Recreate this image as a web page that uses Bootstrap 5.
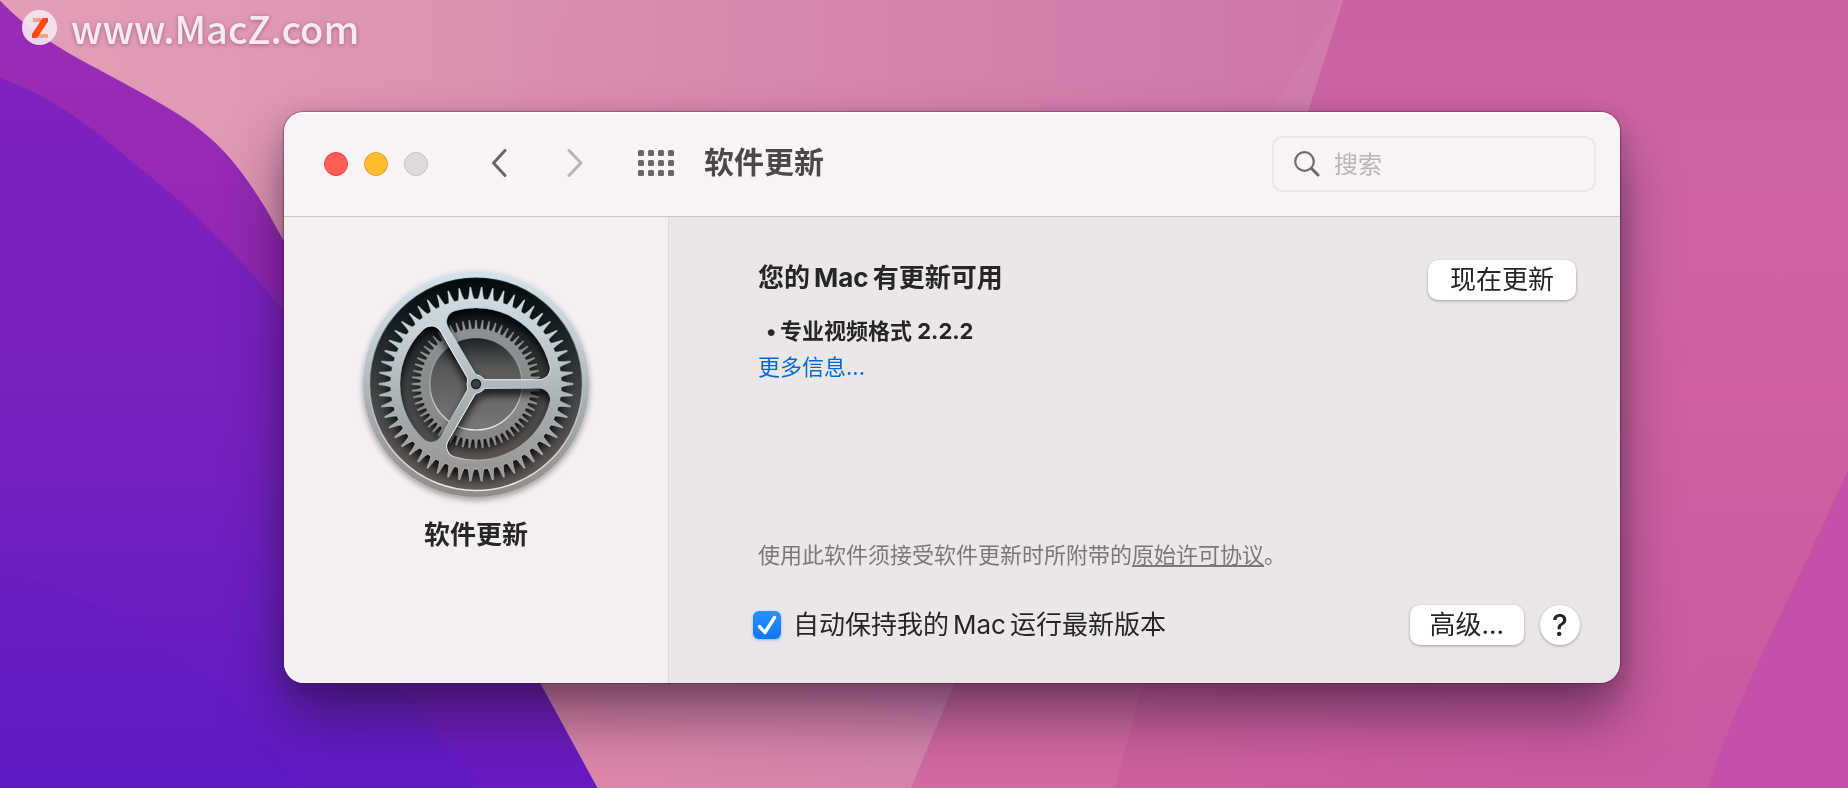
<!DOCTYPE html>
<html lang="zh-CN">
<head>
<meta charset="utf-8">
<meta name="viewport" content="width=device-width, initial-scale=1">
<title>软件更新</title>
<link rel="stylesheet" href="https://cdn.jsdelivr.net/npm/bootstrap@5.3.0/dist/css/bootstrap.min.css">
<style>
  body { font-family: Inter, "Noto Sans CJK SC", sans-serif; color: #262626; background: #d076a4; }
  .wallpaper { position: fixed; inset: 0; width: 100%; height: 100%; z-index: -1; }
  .site-mark { height: 112px; padding: 0 22px; gap: 14px; font: 500 38px/56px "Noto Sans CJK SC", sans-serif; color: #f7e9f0; text-shadow: 0 1px 4px rgba(90,30,70,.45); }
  .site-mark svg { margin-top: 10px; }
  .app-window { margin: 0 228px 105px 284px; border-radius: 20px; overflow: hidden; background: #ebe7e8;
    box-shadow: 0 0 1px 1px rgba(60,20,50,.35), 0 34px 56px rgba(30,15,40,.5), 0 6px 24px rgba(40,15,45,.2); }
  .toolbar { height: 105px; padding: 0 24px 0 40px; background: #f9f3f5; border-bottom: 1px solid #c8c3c5; box-shadow: inset 0 2px #fefcfd; }
  .light { width: 24px; height: 24px; padding: 0; border-radius: 50%; border: 1px solid; }
  .light-close { background: #ff5f57; border-color: #e0443e; }
  .light-min { background: #febc2e; border-color: #dea123; }
  .light-zoom { background: #dfdadc; border-color: #c5c0c2; }
  .tool { padding: 0; border: 0; background: none; line-height: 0; }
  .tool-grid { margin: 0 26px 0 30px; }
  .title { font-size: 30px; line-height: 40px; font-weight: 700; color: #4b484a; }
  .search-box { width: 324px; height: 56px; padding: 0 20px; gap: 14px; border: 2px solid #ece6e8; border-radius: 11px; }
  .search-box input { min-width: 0; padding: 2px 0 0; border: 0; outline: 0; background: none; font-size: 24px; line-height: 32px; color: #262626; }
  .search-box input::placeholder { color: #b9b4b6; opacity: 1; }
  .side { flex: 0 0 385px; background: #f4eff1; border-right: 1px solid #dedadb; padding: 42px 0 40px; gap: 8px; }
  .side svg { width: 250px; height: 250px; }
  .label-lg { font-size: 26px; line-height: 36px; }
  .latin { margin: 0 4px; }
  .pane { min-height: 466px; padding: 43px 40px 38px 89px; }
  .text-md { font-size: 22px; line-height: 36px; }
  .updates { padding-left: 7px; margin: 17px 0 0; list-style: none; }
  .updates li::before { content: "•"; display: inline-block; width: 15px; font-weight: 400; }
  .more { color: #0068da; text-decoration: none; }
  .legal { color: #7b7879; }
  .legal a { color: inherit; text-underline-offset: 2px; }
  .push { height: 40px; padding: 0 20px; border: 0; border-radius: 10px; background: #fff; color: #262626; font-size: 26px; line-height: 38px; box-shadow: 0 1px 3px rgba(0,0,0,.32); }
  .push-main { min-width: 148px; }
  .push-help { width: 40px; padding: 0; border-radius: 50%; font-size: 30px; font-weight: 500; }
  .tick { appearance: none; width: 28px; height: 28px; margin: 0 0 0 -5px; border-radius: 6px; box-shadow: 0 1px 3px rgba(0,90,220,.4);
    background: linear-gradient(#2a90fd, #0a78fa); }
  .tick:checked { background: url("data:image/svg+xml,%3Csvg xmlns='http://www.w3.org/2000/svg' viewBox='0 0 28 28'%3E%3Cpath d='M6.500 15.500 12 21.500 21.500 6.500' fill='none' stroke='%23fff' stroke-width='3.400' stroke-linecap='round' stroke-linejoin='round'/%3E%3C/svg%3E"), linear-gradient(#2a90fd, #0a78fa); }
</style>
</head>
<body>
<svg class="wallpaper" viewBox="0 0 1848 788" preserveAspectRatio="none" aria-hidden="true">
  <defs>
    <linearGradient id="wPink" x1="0" x2="1" y1="0" y2="0"><stop offset="0" stop-color="#e39cb5"/><stop offset=".3" stop-color="#dc8eb0"/><stop offset=".7" stop-color="#cf78a8"/><stop offset="1" stop-color="#cb68a2"/></linearGradient>
    <linearGradient id="wRight" x1="0" x2="0" y1="0" y2="1"><stop offset="0" stop-color="#cb62a0"/><stop offset=".2" stop-color="#ce66a3"/><stop offset=".5" stop-color="#cf629f"/><stop offset="1" stop-color="#c758a2"/></linearGradient>
    <linearGradient id="wLow" x1="0" x2="1" y1="0" y2="0"><stop offset="0" stop-color="#e088a8"/><stop offset="1" stop-color="#d584ae"/></linearGradient>
    <linearGradient id="wRose" x1="0" x2="1" y1="0" y2="0"><stop offset="0" stop-color="#cc629b"/><stop offset="1" stop-color="#cc629b" stop-opacity="0"/></linearGradient>
    <linearGradient id="wViolet" x1="0" x2="0" y1="0" y2="1"><stop offset="0" stop-color="#9a2db6"/><stop offset=".35" stop-color="#9127b2"/><stop offset="1" stop-color="#661ac0"/></linearGradient>
    <linearGradient id="wIndigo" x1="0" x2="0" y1="0" y2="1"><stop offset="0" stop-color="#7e22c0"/><stop offset=".5" stop-color="#7621bf"/><stop offset="1" stop-color="#5f1bc4"/></linearGradient>
  </defs>
  <path fill="url(#wPink)" d="M0 0H1848V788H0z"/>
  <path fill="#fff" fill-opacity=".025" d="M0 0H570L510 112 380 340H0z"/>
  <path fill="#fff" fill-opacity=".04" d="M1343 0 1270 112 1200 240H1280z"/>
  <path fill="url(#wRight)" d="M1343 0H1848V788H1100L1265 240 1308 112z"/>
  <path fill="url(#wLow)" d="M400 600H982L955 682 911 788H500z"/>
  <path fill="#d16a9f" d="M982 600H1165L1144 682 1115 788H911L955 682z"/>
  <path fill="url(#wRose)" d="M1165 600H1848V788H1115L1144 682z"/>
  <path fill="#c350a9" d="M1848 470V788H1708C1735 700 1790 600 1848 470z"/>
  <path fill="url(#wViolet)" stroke="#e59cc4" stroke-opacity=".6" d="M-2 -2C20 22 45 40 87 63C120 81 150 96 180 115C225 144 245 175 267 210L283 239C360 340 480 560 540 682L599 790H-2z"/>
  <path fill="url(#wIndigo)" d="M0 78C40 92 70 112 100 135L187 207C225 244 255 275 290 320C350 430 380 640 395 682Q440 735 480 788H0z"/>
  <path fill="#5017c6" fill-opacity=".09" d="M0 570C110 600 220 660 300 788H0z"/>
</svg>

<header class="site-mark d-flex align-items-start">
  <svg width="35" height="35" viewBox="0 0 35 35" aria-hidden="true"><circle cx="17.500" cy="17.500" r="17.500" fill="#f3e6f0" fill-opacity=".93"/><path fill="#fba184" d="M11 8h8v4h-8zM16 24h10v4H16z"/><path fill="#fd4a14" d="M20.500 8H26v3.500L15 28h-5v-4z"/></svg>
  <span>www.MacZ.com</span>
</header>

<main class="app-window">
  <div class="toolbar d-flex align-items-center">
    <div class="d-flex gap-3">
      <button type="button" class="light light-close" aria-label="关闭"></button>
      <button type="button" class="light light-min" aria-label="最小化"></button>
      <button type="button" class="light light-zoom" aria-label="缩放"></button>
    </div>
    <nav class="d-flex align-items-center ms-5 ps-3">
      <button type="button" class="tool" aria-label="后退"><svg width="16" height="30" fill="none" stroke="#6b6567" stroke-width="3" stroke-linecap="round" stroke-linejoin="round"><path d="M13 1.500 1.500 14 13 26.500"/></svg></button>
      <button type="button" class="tool ms-5 ps-2 pe-2" aria-label="前进"><svg width="36" height="30" fill="none" stroke="#bab4b6" stroke-width="3" stroke-linecap="round" stroke-linejoin="round"><path d="M5 1.500 17 14 5 26.500"/></svg></button>
      <button type="button" class="tool tool-grid" aria-label="显示全部"><svg id="grid" width="36" height="28" fill="#6b6567"></svg></button>
    </nav>
    <h1 class="title mb-0 ms-1 pb-1">软件更新</h1>
    <label class="search-box d-flex align-items-center ms-auto">
      <svg class="flex-shrink-0" width="26" height="26" fill="none" stroke="#6f6a6c" stroke-linecap="round"><circle cx="10.500" cy="10.500" r="9.300" stroke-width="2.200"/><path stroke-width="3" d="m17.500 17.500 6.500 6.500"/></svg>
      <input class="flex-fill" type="search" placeholder="搜索" aria-label="搜索">
    </label>
  </div>

  <div class="d-flex">
    <aside class="side d-flex flex-column align-items-center">
      <svg viewBox="-125 -125 250 250" aria-hidden="true">
        <defs>
          <linearGradient id="metal" gradientUnits="userSpaceOnUse" x1="0" x2="0" y1="-113" y2="113"><stop offset="0" stop-color="#d5e5ec"/><stop offset=".3" stop-color="#c2ced3"/><stop offset=".6" stop-color="#a7aeaf"/><stop offset="1" stop-color="#908d8a"/></linearGradient>
          <linearGradient id="metal2" gradientUnits="userSpaceOnUse" x1="0" x2="0" y1="-64" y2="64"><stop offset="0" stop-color="#8e9293"/><stop offset="1" stop-color="#878785"/></linearGradient>
          <linearGradient id="well" x1="0" x2="0" y1="0" y2="1"><stop offset="0" stop-color="#020a0d"/><stop offset=".2" stop-color="#151c1e"/><stop offset=".55" stop-color="#454646"/><stop offset="1" stop-color="#69625e"/></linearGradient>
          <linearGradient id="plate" x1="0" x2="0" y1="0" y2="1"><stop offset="0" stop-color="#1e2223"/><stop offset=".3" stop-color="#555656"/><stop offset=".65" stop-color="#686866"/><stop offset="1" stop-color="#777775"/></linearGradient>
          <linearGradient id="rim" x1="0" x2="0" y1="0" y2="1"><stop offset="0" stop-color="#9fb3bb" stop-opacity=".2"/><stop offset=".5" stop-color="#c4cfd2" stop-opacity=".6"/><stop offset="1" stop-color="#f1f0ee"/></linearGradient>
          <filter id="drop" x="-20%" y="-20%" width="140%" height="150%"><feDropShadow dx="0" dy="6" stdDeviation="4" flood-color="#000" flood-opacity=".9"/></filter>
          <filter id="base" x="-20%" y="-20%" width="140%" height="150%"><feDropShadow dx="0" dy="3" stdDeviation="3" flood-color="#000" flood-opacity=".35"/></filter>
          <path id="opening" d="M10 -4.300L63.200 -4.300A11 11 0 0 0 73.900 -17.900A76 76 0 0 0 -21.500 -72.900A11 11 0 0 0 -27.900 -56.900L-1.300 -10.800Q-.6 -9.600 1.600 -8.900A9 9 0 0 1 6.900 -5.800Q8.600 -4.300 10 -4.300Z"/>
          <g id="openings"><use href="#opening"/><use href="#opening" transform="rotate(120)"/><use href="#opening" transform="rotate(240)"/></g>
          <mask id="cut" maskUnits="userSpaceOnUse" x="-113" y="-113" width="226" height="226"><path fill="#fff" d="M-113-113h226v226h-226z"/><use href="#openings" fill="#000"/><circle r="4.500" fill="#000"/></mask>
        </defs>
        <circle r="113" fill="url(#metal)" filter="url(#base)"/>
        <circle r="106.500" fill="url(#well)" stroke="url(#rim)" stroke-width="1.500"/>
        <g filter="url(#drop)">
          <path id="smallGear" fill="url(#metal2)" stroke="#b9bdbd" stroke-width=".3"/>
        </g>
        <circle r="46" fill="url(#plate)" stroke="url(#rim)" stroke-width="1.200"/>
        <g filter="url(#drop)"><g mask="url(#cut)"><path id="bigGear" fill="url(#metal)" stroke="#dce5e8" stroke-width=".4"/></g></g>
        <use href="#openings" fill="none" stroke="url(#rim)" stroke-width="1"/>
        <circle r="4.500" fill="#3d4040" stroke="#1e2222" stroke-width="1.400"/>
      </svg>
      <strong class="label-lg">软件更新</strong>
    </aside>

    <section class="pane flex-fill d-flex flex-column">
      <div class="d-flex justify-content-between align-items-start">
        <div>
          <h2 class="label-lg fw-bold mb-0">您的<span class="latin">Mac</span>有更新可用</h2>
          <ul class="updates text-md fw-bold"><li>专业视频格式 2.2.2</li></ul>
          <a class="more text-md" href="#">更多信息...</a>
        </div>
        <button type="button" class="push push-main me-1">现在更新</button>
      </div>
      <p class="legal text-md mt-auto mb-3 pb-3">使用此软件须接受软件更新时所附带的<a href="#">原始许可协议</a>。</p>
      <div class="d-flex align-items-center">
        <input class="tick" type="checkbox" id="auto" checked>
        <label class="label-lg ps-2 ms-1" for="auto">自动保持我的<span class="latin">Mac</span>运行最新版本</label>
        <button type="button" class="push ms-auto me-3">高级...</button>
        <button type="button" class="push push-help" aria-label="帮助">?</button>
      </div>
    </section>
  </div>
</main>

<script src="https://cdn.jsdelivr.net/npm/bootstrap@5.3.0/dist/js/bootstrap.bundle.min.js"></script>
<script>
  // Closed outline of a gear with curved, pointed teeth; optional bore.
  function gear(teeth, root, tip, bore, halfBase) {
    const step = 2 * Math.PI / teeth;
    const at = (r, a) => (r * Math.cos(a)).toFixed(2) + ' ' + (r * Math.sin(a)).toFixed(2);
    let d = '';
    for (let i = 0; i < teeth; i++) {
      const a = i * step, b = halfBase / root, t = .5 / tip, m = root + (tip - root) * .25;
      d += (i ? 'L' : 'M') + at(root, a - b) + 'Q' + at(m, a - b * .5) + ' ' + at(tip, a - t) +
           'L' + at(tip, a + t) + 'Q' + at(m, a + b * .5) + ' ' + at(root, a + b);
    }
    d += 'Z';
    if (bore) d += `M${bore} 0A${bore} ${bore} 0 1 0 ${-bore} 0A${bore} ${bore} 0 1 0 ${bore} 0Z`;
    return d;
  }
  document.getElementById('bigGear').setAttribute('d', gear(54, 85, 97, 0, 3));
  document.getElementById('smallGear').setAttribute('d', gear(60, 55, 64, 46, 1.500));
  let dots = '';
  for (let r = 0; r < 3; r++) for (let c = 0; c < 4; c++) dots += `<rect x="${c * 10}" y="${r * 10}" width="6" height="6" rx="1.500"/>`;
  document.getElementById('grid').innerHTML = dots;
</script>
</body>
</html>
